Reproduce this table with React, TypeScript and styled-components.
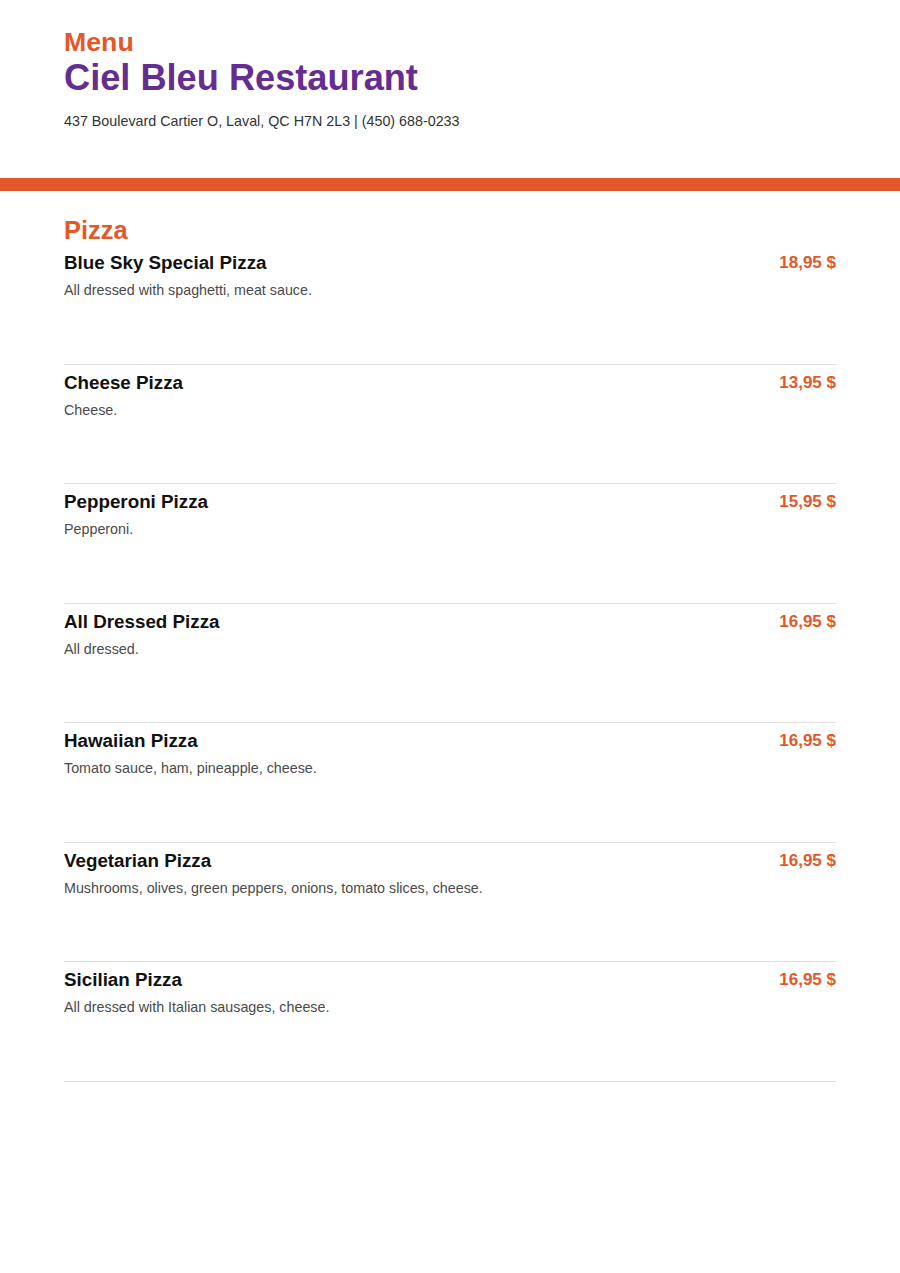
import { FC } from 'react';
import styled, { createGlobalStyle } from 'styled-components';

const GlobalStyle = createGlobalStyle`
  body {
    margin: 0;
    background: #ffffff;
    font-family: 'Liberation Sans', Arial, sans-serif;
  }
`;

const Page = styled.div`
  width: 100%;
  min-height: 1273px;
  background: #ffffff;
`;

const Header = styled.header`
  padding: 27px 64px 48px;
`;

const Kicker = styled.h2`
  margin: 0;
  font-size: 26.7px;
  line-height: 30px;
  font-weight: 700;
  color: #e2582a;
`;

const Title = styled.h1`
  margin: 0;
  font-size: 36.2px;
  line-height: 42px;
  font-weight: 700;
  color: #662d91;
`;

const Address = styled.p`
  margin: 13px 0 0;
  font-size: 14.3px;
  line-height: 18px;
  color: #333333;
`;

const Bar = styled.div`
  height: 13px;
  background: #e2582a;
`;

const Section = styled.section`
  padding: 24px 64px 0;
`;

const SectionTitle = styled.h2`
  margin: 0;
  font-size: 25.4px;
  line-height: 30px;
  font-weight: 700;
  color: #e2582a;
`;

const Item = styled.div`
  padding: 7px 0 64.5px;
  border-bottom: 1px solid #e0e0e0;
`;

const ItemHead = styled.div`
  display: flex;
  justify-content: space-between;
  align-items: center;
`;

const ItemName = styled.h3`
  margin: 0;
  font-size: 18.8px;
  line-height: 22px;
  font-weight: 700;
  color: #111111;
`;

const Price = styled.span`
  font-size: 17px;
  line-height: 22px;
  font-weight: 700;
  color: #e2582a;
`;

const ItemDesc = styled.p`
  margin: 7px 0 0;
  font-size: 14.3px;
  line-height: 18px;
  color: #4a4a4a;
`;

type Dish = { name: string; price: string; desc: string };

const pizzas: Dish[] = [
  { name: 'Blue Sky Special Pizza', price: '18,95 $', desc: 'All dressed with spaghetti, meat sauce.' },
  { name: 'Cheese Pizza', price: '13,95 $', desc: 'Cheese.' },
  { name: 'Pepperoni Pizza', price: '15,95 $', desc: 'Pepperoni.' },
  { name: 'All Dressed Pizza', price: '16,95 $', desc: 'All dressed.' },
  { name: 'Hawaiian Pizza', price: '16,95 $', desc: 'Tomato sauce, ham, pineapple, cheese.' },
  {
    name: 'Vegetarian Pizza',
    price: '16,95 $',
    desc: 'Mushrooms, olives, green peppers, onions, tomato slices, cheese.',
  },
  { name: 'Sicilian Pizza', price: '16,95 $', desc: 'All dressed with Italian sausages, cheese.' },
];

const App: FC = () => {
  return (
    <Page>
      <GlobalStyle />
      <Header>
        <Kicker>Menu</Kicker>
        <Title>Ciel Bleu Restaurant</Title>
        <Address>437 Boulevard Cartier O, Laval, QC H7N 2L3 | (450) 688-0233</Address>
      </Header>
      <Bar />
      <Section>
        <SectionTitle>Pizza</SectionTitle>
        {pizzas.map((p) => (
          <Item key={p.name}>
            <ItemHead>
              <ItemName>{p.name}</ItemName>
              <Price>{p.price}</Price>
            </ItemHead>
            <ItemDesc>{p.desc}</ItemDesc>
          </Item>
        ))}
      </Section>
    </Page>
  );
};

export default App;
